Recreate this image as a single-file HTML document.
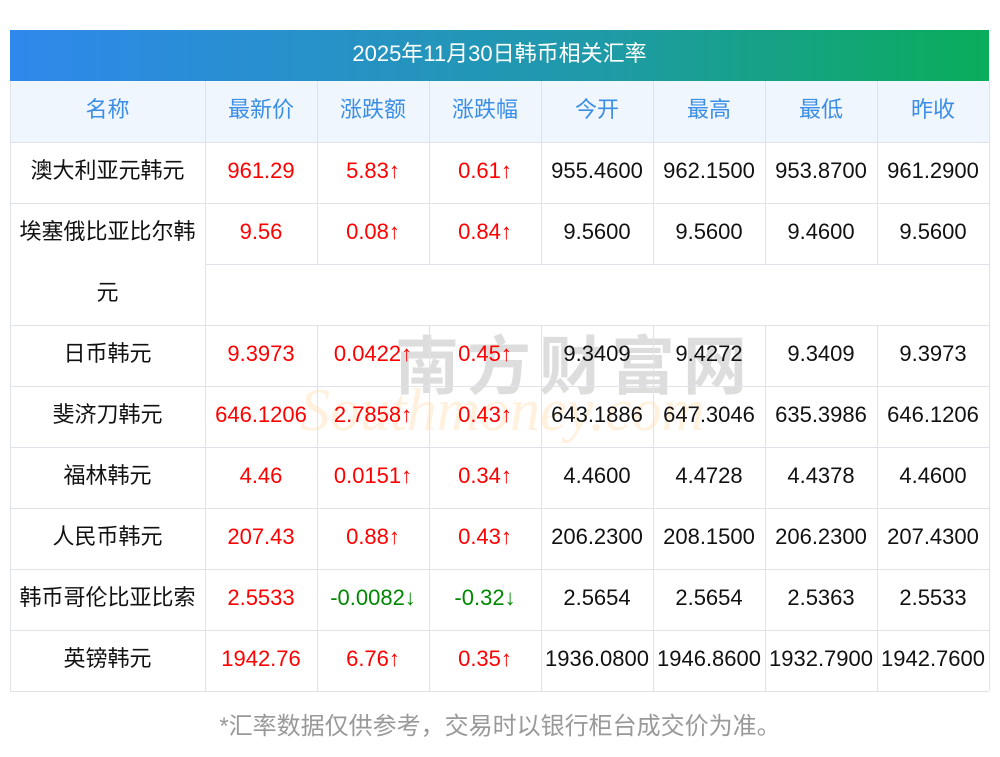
<!DOCTYPE html><html><head><meta charset="utf-8"><style>
body{margin:0;width:1000px;height:757px;background:#fff;font-family:"Liberation Sans","Noto Sans CJK SC",sans-serif;position:relative;overflow:hidden}
.t{position:absolute;left:10px;top:30px;width:979px;height:51px;background:linear-gradient(90deg,#2f88ec,#1f9aa8 60%,#0aad5a);color:#fff;font-size:22px;text-align:center;line-height:47px}
.c{position:absolute;height:61px;line-height:57px;text-align:center;font-size:22px;box-sizing:border-box;color:#111;white-space:nowrap}
.h{color:#3a8ee6;background:#f0f6fe}
.r{color:#f00}.g{color:#080}
.hl{position:absolute;height:1px;background:#dfe2ea}
.vl{position:absolute;width:1px;background:#dfe2ea}
.f{position:absolute;top:706px;width:1000px;text-align:center;font-size:24px;color:#999}
.wm{position:absolute;font-size:64px;color:rgba(120,120,120,.25);left:395px;top:316px;letter-spacing:8px;font-weight:bold;font-family:"Noto Sans CJK SC",sans-serif}
.wm2{position:absolute;font-size:60px;color:rgba(255,200,120,.25);left:300px;top:376px;font-style:italic;font-family:"Liberation Serif",serif}
</style></head><body>
<div class="t">2025年11月30日韩币相关汇率</div>
<div style="position:absolute;left:10px;top:81px;width:979px;height:61px;background:#f0f6fe"></div>
<div class="wm">南方财富网</div><div class="wm2">Southmoney.com</div>
<div id="g"></div>
<div class="f">*汇率数据仅供参考，交易时以银行柜台成交价为准。</div>
<script>
var xs=[10,205,317,429,541,653,765,877,989];
var rows=[
["名称","最新价","涨跌额","涨跌幅","今开","最高","最低","昨收"],
["澳大利亚元韩元","961.29","5.83↑","0.61↑","955.4600","962.1500","953.8700","961.2900"],
["埃塞俄比亚比尔韩","9.56","0.08↑","0.84↑","9.5600","9.5600","9.4600","9.5600"],
["元","","","","","","",""],
["日币韩元","9.3973","0.0422↑","0.45↑","9.3409","9.4272","9.3409","9.3973"],
["斐济刀韩元","646.1206","2.7858↑","0.43↑","643.1886","647.3046","635.3986","646.1206"],
["福林韩元","4.46","0.0151↑","0.34↑","4.4600","4.4728","4.4378","4.4600"],
["人民币韩元","207.43","0.88↑","0.43↑","206.2300","208.1500","206.2300","207.4300"],
["韩币哥伦比亚比索","2.5533","-0.0082↓","-0.32↓","2.5654","2.5654","2.5363","2.5533"],
["英镑韩元","1942.76","6.76↑","0.35↑","1936.0800","1946.8600","1932.7900","1942.7600"]];
var h="";
rows.forEach(function(r,i){var y=81+i*61;
 r.forEach(function(v,j){var cls="c";if(i==0)cls+=" h";else if(j>=1&&j<=3)cls+=(v.indexOf("-")==0?" g":" r");
 h+='<div class="'+cls+'" style="left:'+xs[j]+'px;width:'+(xs[j+1]-xs[j])+'px;top:'+y+'px">'+v+'</div>';});
 if(i!=2)h+='<div class="hl" style="left:10px;width:979px;top:'+(y+61)+'px"></div>';
 else h+='<div class="hl" style="left:205px;width:784px;top:'+(y+61)+'px"></div>';
 for(var j=0;j<9;j++){ if(i==3&&j>1&&j<8)continue; h+='<div class="vl" style="left:'+xs[j]+'px;top:'+y+'px;height:61px"></div>';}
});
document.getElementById("g").innerHTML=h;
</script>
</body></html>
